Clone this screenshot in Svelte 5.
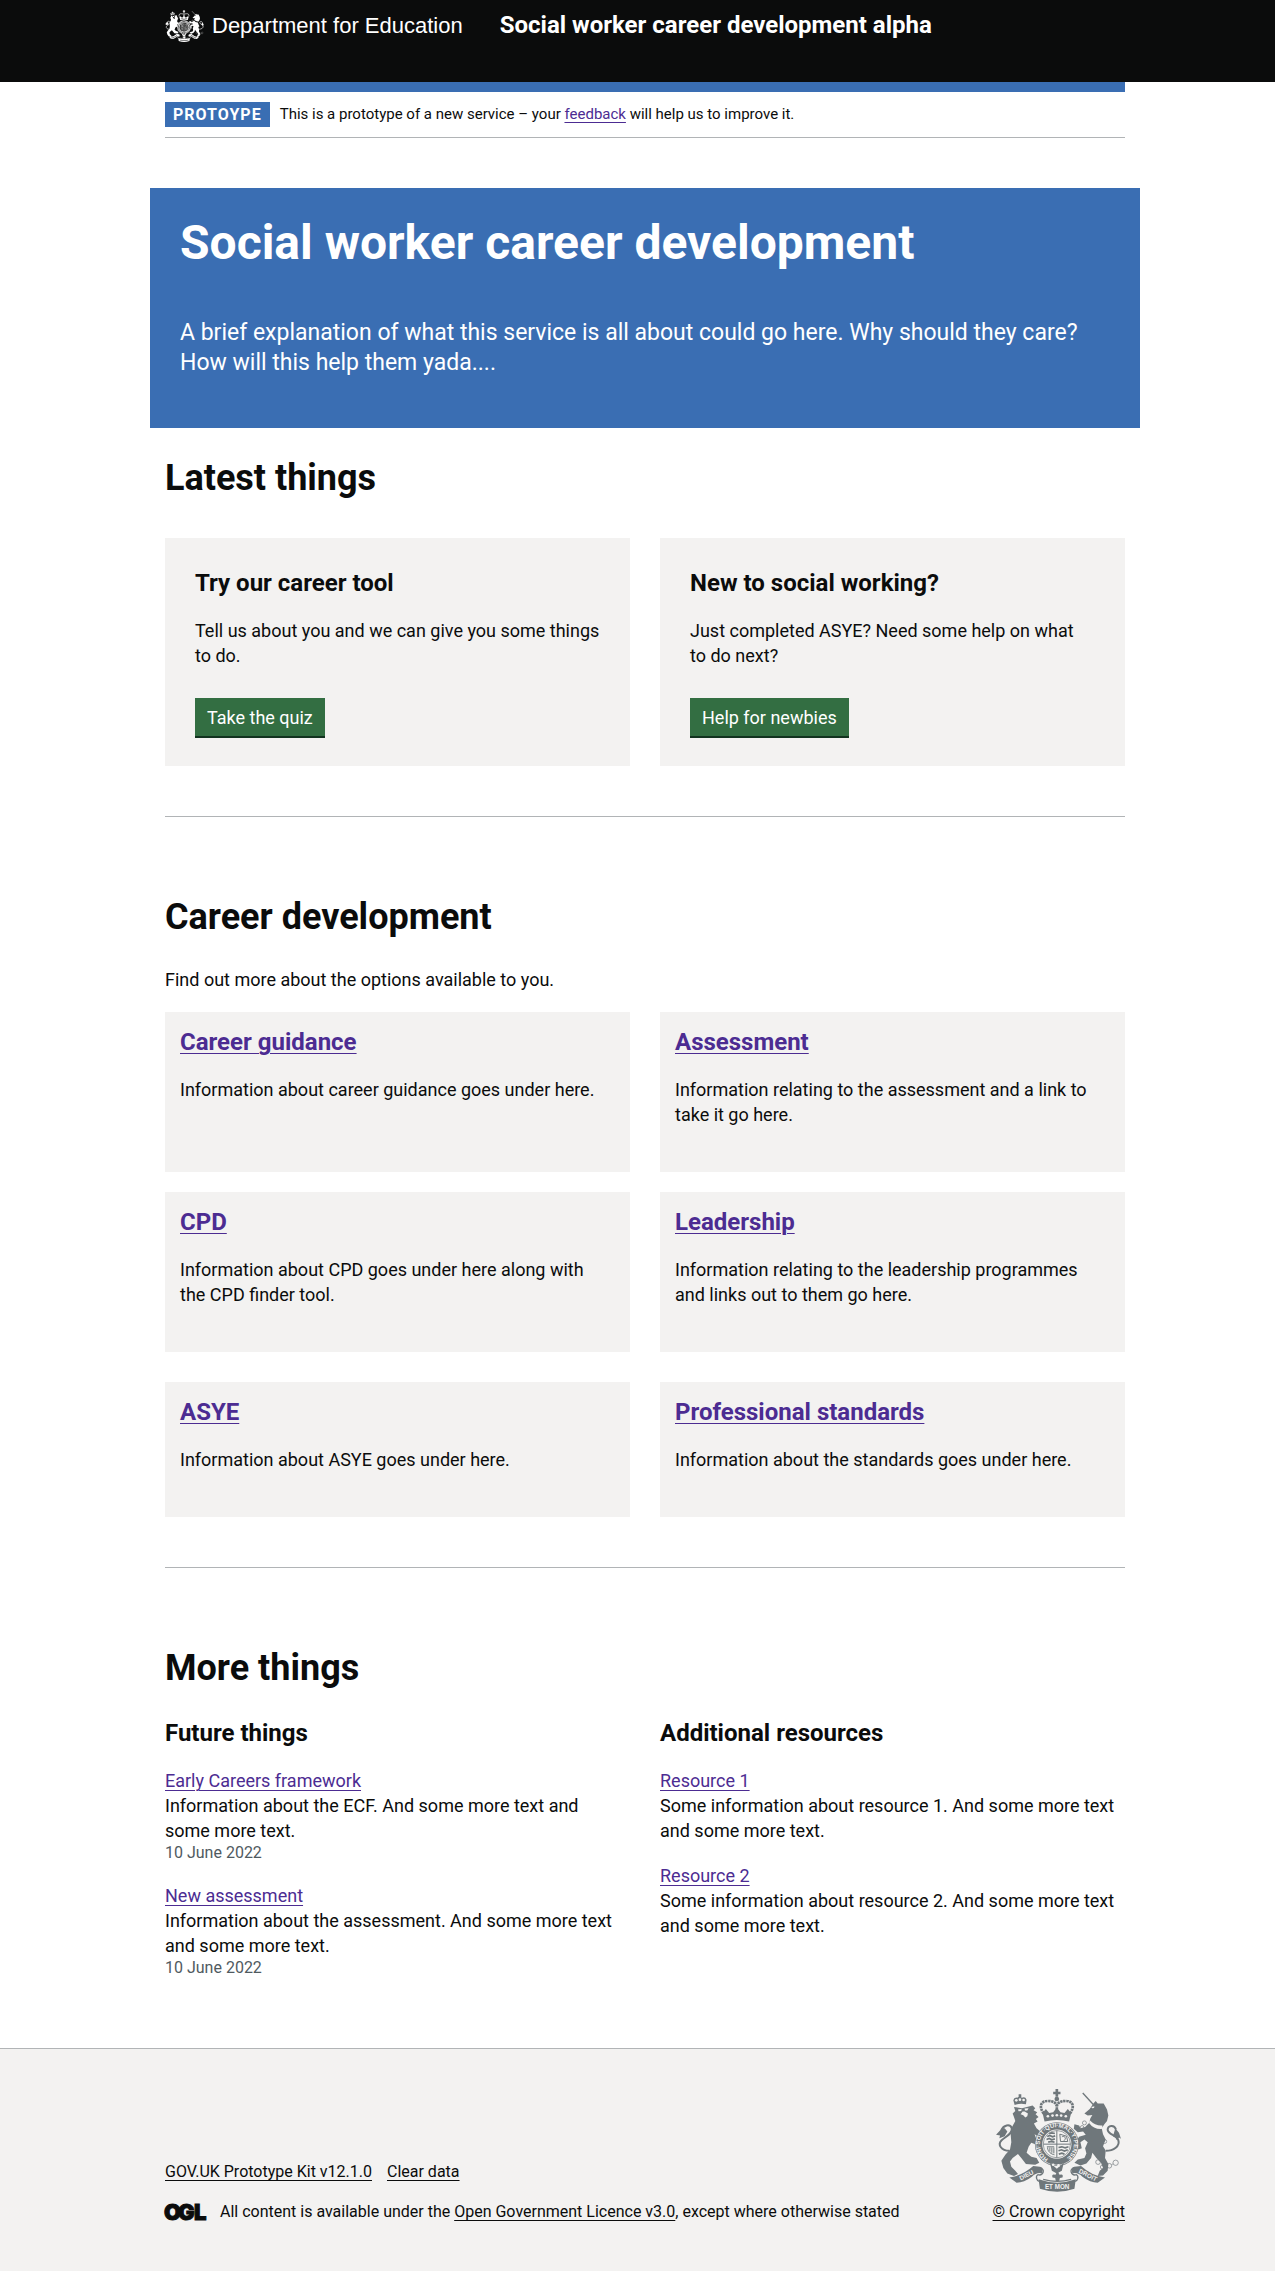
<script>
  const promos = [
    { title: 'Try our career tool', text: 'Tell us about you and we can give you some things to do.', action: 'Take the quiz' },
    { title: 'New to social working?', text: 'Just completed ASYE? Need some help on what to\u00a0do next?', action: 'Help for newbies' }
  ];

  const topicGroups = [
    [
      { title: 'Career guidance', text: 'Information about career guidance goes under here.' },
      { title: 'Assessment', text: 'Information relating to the assessment and a link to take it go here.' },
      { title: 'CPD', text: 'Information about CPD goes under here along with the\u00a0CPD finder tool.' },
      { title: 'Leadership', text: 'Information relating to the leadership programmes and links out to them go here.' }
    ],
    [
      { title: 'ASYE', text: 'Information about ASYE goes under here.' },
      { title: 'Professional standards', text: 'Information about the standards goes under here.' }
    ]
  ];

  const columns = [
    {
      title: 'Future things',
      items: [
        { title: 'Early Careers framework', text: 'Information about the ECF. And some more text and some\u00a0more text.', date: '10 June 2022' },
        { title: 'New assessment', text: 'Information about the assessment. And some more text and some more text.', date: '10 June 2022' }
      ]
    },
    {
      title: 'Additional resources',
      items: [
        { title: 'Resource 1', text: 'Some information about resource 1. And some more text and some more text.' },
        { title: 'Resource 2', text: 'Some information about resource 2. And some more text and some more text.' }
      ]
    }
  ];
</script>

{#snippet crest(detailed)}
  <svg class="crest" viewBox="50 54 376 310" aria-hidden="true">
    <!-- supporters' tails -->
    <g class="line" stroke-width="6">
      <path d="M90 240C66 240 54 222 66 209C78 197 102 188 97 171C92 158 72 162 66 178" />
      <path d="M380 240C404 240 424 226 418 208C412 192 388 192 386 177C386 163 406 160 411 176" />
    </g>
    <path class="ink" d="M68 172L50 192L62 194L60 202L76 196L84 182L76 172ZM409 172L402 196L410 200L414 208L420 200L426 204L420 186Z" />
    <!-- lion -->
    <path class="ink" d="M104 108L128 112L160 104L168 112L163 118L174 124L169 130L178 138L170 144L175 152L164 158L172 172L186 184L196 200L190 206L176 196L166 190L172 206L184 216L188 232L180 236L172 222L156 216L148 228L142 246L156 258L172 262L180 276L168 282L140 280L126 262L116 250L100 262L92 272L96 288L108 300L116 310L104 316L84 308L72 292L66 270L78 252L92 236L96 214L94 190L98 168L108 150L104 138L100 128L108 120Z" />
    <path class="knock" d="M116 116L127 114L126 120L118 121ZM136 113L148 112L144 119L137 119ZM130 122L136 122L146 128L144 136L138 140L132 133L124 130Z" />
    <path class="ink" d="M106 102L102 88Q104 78 114 80Q120 74 128 80Q138 76 142 86L140 100Q122 96 106 102ZM118 70H126V78H118Z" />
    <g class="knock"><circle cx="111" cy="88" r="4" /><circle cx="122" cy="86" r="4" /><circle cx="133" cy="87" r="4" /></g>
    <!-- unicorn -->
    <path class="line" stroke-width="4" d="M311 66L344 102" />
    <path class="ink" d="M343 98L350 90L356 98L374 98L384 116L388 134L384 150L376 160L368 172L372 190L380 206L372 226L380 240L378 262L388 280L386 300L372 314L356 316L362 300L372 292L366 276L352 262L340 246L336 262L322 278L304 284L286 276L296 266L316 262L322 248L318 232L326 214L316 206L304 214L308 232L298 236L290 214L300 198L320 192L312 182L296 184L284 174L286 160L300 164L304 172L318 168L330 156L334 142L340 132L326 134L316 128L332 114Z" />
    <path class="knock" d="M337 108L346 106L345 111L339 112ZM332 148Q350 166 370 164L370 174Q344 176 330 156Z" />
    <g class="line" stroke-width="2">
      <circle cx="316" cy="156" r="6" /><circle cx="309" cy="169" r="5" /><circle cx="377" cy="212" r="6" />
      <circle cx="370" cy="238" r="6" /><circle cx="357" cy="274" r="7" /><circle cx="370" cy="289" r="6" />
      <circle cx="391" cy="285" r="7" /><circle cx="410" cy="276" r="8" /><path d="M376 288L385 286M398 282L402 279" />
    </g>
    <!-- royal crown -->
    <path class="ink" d="M229 54H237V62H244V70H237V77H229V70H222V62H229Z" />
    <circle class="ink" cx="233" cy="84" r="7" />
    <g class="line" stroke-width="8" stroke-dasharray="7 2">
      <path d="M194 128C178 108 184 90 206 90C222 90 233 96 233 108" />
      <path d="M272 128C288 108 282 90 260 90C244 90 233 96 233 108V126" />
    </g>
    <path class="ink" d="M190 126L200 114L210 126L222 124L233 110L244 124L256 126L266 114L276 126L270 152Q233 142 196 152Z" />
    <g class="knock"><circle cx="206" cy="136" r="4" /><circle cx="220" cy="134" r="4" /><circle cx="233" cy="133" r="4" /><circle cx="246" cy="134" r="4" /><circle cx="260" cy="136" r="4" /></g>
    <!-- garter and shield -->
    <circle class="ink" cx="233" cy="220" r="66" />
    <circle class="knock-line" cx="233" cy="220" r="63" stroke-width="2" />
    <circle class="knock" cx="233" cy="220" r="44" />
    {#if detailed}
      <path id="garter" fill="none" d="M207 264A51 51 0 1 1 259 264" />
      <text class="motto" font-size="18"><textPath href="#garter">HONI·SOIT·QUI·MAL·Y·PENSE</textPath></text>
    {:else}
      <circle class="knock-line" cx="233" cy="220" r="54" stroke-width="10" stroke-dasharray="6 6" />
    {/if}
    <circle class="line" cx="233" cy="220" r="41" stroke-width="2" />
    <path class="line" stroke-width="3" d="M233 179V261M192 220H274" />
    <g class="line" stroke-width="5">
      <path d="M204 197L212 194L220 198L228 195M202 206L210 203L218 207L227 204M207 214L215 212L226 214M210 188L218 186L227 188" />
      <path d="M239 250L248 247L256 250M238 240L247 237L256 241L266 237M238 230L248 228L258 231L268 228" />
    </g>
    <path class="line" stroke-width="3" d="M242 190L262 196L266 212L244 212ZM248 198C256 194 264 202 254 210M203 228H225M205 230C206 244 216 250 226 252M212 230V242M218 230V246M224 230V248" />
    <path class="ink" d="M212 276L233 294L254 276L248 300L233 308L218 300Z" />
    <g class="knock"><circle cx="222" cy="282" r="4" /><circle cx="238" cy="284" r="4" /></g>
    <!-- scroll -->
    <path class="ink" d="M90 320Q128 316 162 286L182 288Q194 292 188 308Q172 304 158 318Q134 336 112 336ZM378 320Q338 316 306 286L286 288Q274 292 280 308Q296 304 310 318Q334 336 356 336Z" />
    <path class="ink" d="M178 326Q234 346 290 326L286 354Q234 372 182 354Z" />
    <g class="line" stroke-width="4"><path d="M182 290C200 296 192 316 176 312C168 316 172 330 180 332M286 290C268 296 276 316 292 312C300 316 296 330 288 332M192 326Q234 338 276 326" /></g>
    <path class="ink" d="M235 300L241 312Q254 308 250 320L242 322L240 332H230L228 322L220 320Q216 308 229 312Z" />
    {#if detailed}
      <g class="motto" font-size="19" text-anchor="middle">
        <text transform="rotate(-27 144 318)" x="144" y="319">DIEU</text>
        <text x="234" y="356">ET MON</text>
        <text transform="rotate(27 324 318)" x="324" y="319">DROIT</text>
      </g>
    {:else}
      <path class="knock-line" stroke-width="10" stroke-dasharray="5 5" d="M112 326Q140 320 166 300M194 346Q234 354 276 346M302 300Q326 320 356 326" />
    {/if}
  </svg>
{/snippet}

<header class="band header">
  <div class="container header-inner">
    <a class="brand" href="#home">{@render crest(false)}<span>Department for Education</span></a>
    <a class="service" href="#home">Social worker career development alpha</a>
  </div>
</header>

<div class="band">
  <div class="container">
    <div class="phase">
      <strong class="tag">PROTOYPE</strong>
      <span>This is a prototype of a new service – your <a href="#feedback">feedback</a> will help us to improve it.</span>
    </div>

    <main>
      <section class="hero">
        <h1>Social worker career development</h1>
        <p>A brief explanation of what this service is all about could go here. Why should they care? How will this help them yada....</p>
      </section>

      <section>
        <h2>Latest things</h2>
        <div class="grid promos">
          {#each promos as promo}
            <article class="card promo">
              <h3>{promo.title}</h3>
              <p>{promo.text}</p>
              <button type="button">{promo.action}</button>
            </article>
          {/each}
        </div>
      </section>
      <hr />

      <section>
        <h2>Career development</h2>
        <p class="intro">Find out more about the options available to you.</p>
        <div class="groups">
          {#each topicGroups as group}
            <div class="grid">
              {#each group as topic}
                <article class="card topic">
                  <h3><a href="#topic">{topic.title}</a></h3>
                  <p>{topic.text}</p>
                </article>
              {/each}
            </div>
          {/each}
        </div>
      </section>
      <hr />

      <section>
        <h2>More things</h2>
        <div class="grid">
          {#each columns as column}
            <div>
              <h3>{column.title}</h3>
              <ul>
                {#each column.items as item}
                  <li>
                    <a href="#item">{item.title}</a>
                    <p>{item.text}</p>
                    {#if item.date}<time datetime="2022-06-10">{item.date}</time>{/if}
                  </li>
                {/each}
              </ul>
            </div>
          {/each}
        </div>
      </section>
    </main>
  </div>
</div>

<footer class="band footer">
  <div class="container footer-inner">
    <div>
      <nav class="footer-links" aria-label="Support links">
        <a href="#kit">GOV.UK Prototype Kit v12.1.0</a>
        <a href="#clear">Clear data</a>
      </nav>
      <div class="licence">
        <svg class="ogl" viewBox="0 0 41 17" role="img" aria-label="Open Government Licence">
          <text x="-1 13 29" y="16">OGL</text>
        </svg>
        <span>All content is available under the <a href="#licence">Open Government Licence v3.0</a>, except where otherwise stated</span>
      </div>
    </div>
    <a class="crown" href="#copyright">{@render crest(true)}<span>© Crown copyright</span></a>
  </div>
</footer>

<style>
  :global(body) {
    margin: 0;
    background: #fff;
    color: #0b0c0c;
    font: 18px/25px Roboto, Arial, sans-serif;
  }
  h1, h2, h3, p, ul { margin: 0; padding: 0; }
  h1, h2, h3 { font-weight: 700; }
  h1 { font-size: 48px; line-height: 50px; }
  h2 { margin-bottom: 30px; font-size: 36px; line-height: 40px; }
  h3 { font-size: 24px; line-height: 30px; }
  a { color: #4c2c92; text-decoration-thickness: 1px; text-underline-offset: 3px; }

  .band { padding-left: 15px; }
  .container { max-width: 960px; margin: 0 auto; }

  .crest { display: block; }
  .ink { fill: currentColor; }
  .knock { fill: var(--ground); }
  .line { fill: none; stroke: currentColor; }
  .knock-line { fill: none; stroke: var(--ground); }
  .motto { fill: var(--ground); font-family: "Liberation Sans", Arial, sans-serif; font-weight: 700; }

  .header { padding-top: 10px; padding-bottom: 40px; background: #0b0c0c; }
  .header-inner { display: flex; align-items: flex-start; gap: 37px; }
  .brand, .service { color: #fff; text-decoration: none; }
  .brand { --ground: #0b0c0c; display: flex; gap: 8px; font: 22px/32px "Liberation Sans", Arial, sans-serif; }
  .brand .crest { width: 39px; height: 32px; }
  .service { font-size: 24px; font-weight: 700; line-height: 30px; }

  .phase {
    display: flex;
    align-items: center;
    gap: 10px;
    padding: 10px 0;
    border-top: 10px solid #3a6eb3;
    border-bottom: 1px solid #b1b4b6;
    font-size: 15px;
  }
  .tag { padding: 0 8px; background: #3a6eb3; color: #fff; font-size: 16px; letter-spacing: 1px; }

  .hero { margin: 50px -15px 30px; padding: 30px 30px 50px; background: #3a6eb3; color: #fff; }
  .hero h1 { margin-bottom: 50px; }
  .hero p { font-size: 23px; line-height: 30px; }

  .grid { display: grid; grid-template-columns: 1fr 1fr; gap: 20px 30px; }
  .promos { margin-top: 40px; }
  .card { background: #f3f2f1; }
  .card h3 { margin-bottom: 20px; }
  .promo { padding: 30px 30px 28px; }
  .promo p { margin-bottom: 30px; }
  button {
    display: block;
    height: 40px;
    padding: 0 12px;
    border: 0;
    border-bottom: 2px solid #12331f;
    background: #336e42;
    color: #fff;
    font: inherit;
  }
  hr { height: 1px; margin: 50px 0 80px; border: 0; background: #b1b4b6; }
  .intro { margin-bottom: 20px; }
  .groups { display: grid; gap: 30px; }
  .topic { padding: 15px 15px 45px; }
  ul { display: grid; gap: 20px; margin-top: 20px; list-style: none; }
  time { display: block; color: #505a5f; font-size: 16px; line-height: 20px; }

  .footer {
    margin-top: 70px;
    padding-top: 40px;
    padding-bottom: 50px;
    border-top: 1px solid #b1b4b6;
    background: #f3f2f1;
    font-size: 16px;
    line-height: 20px;
  }
  .footer a { color: #0b0c0c; }
  .footer-inner { display: flex; justify-content: space-between; align-items: flex-end; }
  .footer-links { display: flex; gap: 15px; margin-bottom: 20px; }
  .licence { display: flex; align-items: center; gap: 14px; }
  .ogl { width: 41px; height: 17px; overflow: visible; }
  .ogl text { fill: #0b0c0c; stroke: #0b0c0c; font: 900 22px Inter, sans-serif; }
  .crown { --ground: #f3f2f1; display: grid; justify-items: center; gap: 10px; }
  .crown .crest { width: 125px; height: 103px; color: #6f777b; }
</style>
